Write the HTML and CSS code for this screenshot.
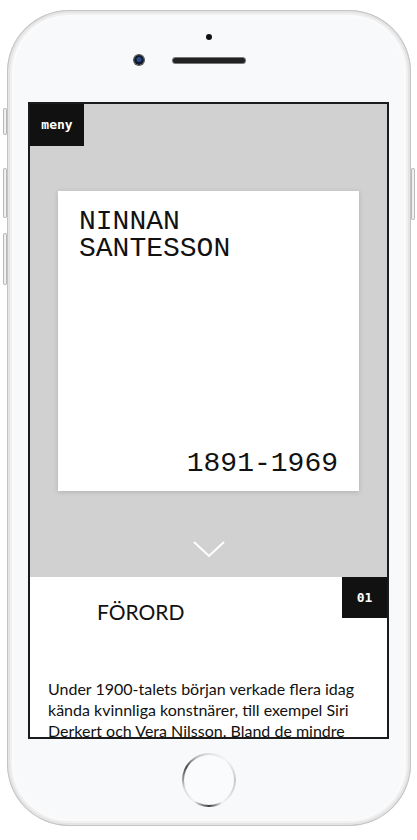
FILE: index.html
```html
<!DOCTYPE html>
<html lang="sv">
<head>
<meta charset="utf-8">
<title>Ninnan Santesson</title>
<link rel="stylesheet" href="styles.css">
</head>
<body>
<div class="phone">
  <span class="side-btn mute"></span>
  <span class="side-btn vol-up"></span>
  <span class="side-btn vol-down"></span>
  <span class="side-btn power"></span>
  <div class="face-top">
    <span class="sensor-dot"></span>
    <div class="sensors">
      <span class="camera"></span>
      <span class="speaker"></span>
      <span></span>
    </div>
  </div>
  <div class="screen">
    <section class="hero">
      <div class="menu">meny</div>
      <div class="card">
        <h1 class="name"><span class="name-line">NINNAN</span><span class="name-line">SANTESSON</span></h1>
        <p class="dates">1891-1969</p>
      </div>
      <svg class="chevron" width="34" height="18" viewBox="0 0 34 18">
        <polyline points="2,2 17,16 32,2" fill="none" stroke="#fff" stroke-width="2"/>
      </svg>
    </section>
    <section class="chapter">
      <div class="chapter-head">
        <h2 class="chapter-title">FÖRORD</h2>
        <span class="chapter-num">01</span>
      </div>
      <p class="chapter-text">Under 1900-talets början verkade flera idag kända kvinnliga konstnärer, till exempel Siri Derkert och Vera Nilsson. Bland de mindre kända finns Ninnan Santesson, skulptör och tecknare.</p>
    </section>
  </div>
  <div class="face-bottom">
    <div class="home"><div class="home-inner"></div></div>
  </div>
</div>
</body>
</html>
```

FILE: styles.css
```css
html, body {
  margin: 0;
  padding: 0;
  background: #fff;
}

.phone {
  position: relative;
  box-sizing: border-box;
  width: 404px;
  height: 816px;
  margin: 10px 0 0 7px;
  border-radius: 62px;
  background: #f8f9fb;
  box-shadow:
    inset 0 0 0 1px #c4c4c4,
    inset 0 0 0 3px #e4e4e4,
    inset 0 0 0 5px #f0f0f0,
    inset 0 0 0 7px #fbfbfb;
  padding: 0 22px 0 21px;
  display: flex;
  flex-direction: column;
}

.side-btn {
  position: absolute;
  width: 4px;
  border-radius: 2px;
  background: linear-gradient(90deg, #e8e8e8, #fafafa);
  box-shadow: inset 0 0 0 1px #b8b8b8;
}
.mute { left: -4px; top: 98px; height: 27px; }
.vol-up { left: -4px; top: 158px; height: 50px; }
.vol-down { left: -4px; top: 223px; height: 52px; }
.power { right: -4px; top: 158px; height: 52px; }

.face-top {
  height: 92px;
  box-sizing: border-box;
  padding-top: 24px;
  display: flex;
  flex-direction: column;
  align-items: center;
}

.sensor-dot {
  width: 6px;
  height: 6px;
  border-radius: 50%;
  background: #111;
}

.sensors {
  margin-top: 15px;
  width: 100%;
  display: grid;
  grid-template-columns: 1fr auto 1fr;
  align-items: center;
}

.camera {
  justify-self: end;
  margin-right: 29px;
  width: 10px;
  height: 10px;
  border-radius: 50%;
  background: radial-gradient(circle at 50% 45%, #2b4c8a 0 2px, #0f1a2e 3px);
  box-shadow: 0 0 0 1px #555;
}

.speaker {
  width: 72px;
  height: 5px;
  border-radius: 3px;
  background: #222;
  box-shadow: 0 0 0 1px #777;
}

.screen {
  box-sizing: border-box;
  width: 361px;
  height: 637px;
  border: 2px solid #1b1b1b;
  background: #fff;
  overflow: hidden;
}

.hero {
  height: 473px;
  background: #d1d1d1;
  display: flex;
  flex-direction: column;
}

.menu {
  width: 54px;
  height: 42px;
  background: #111;
  color: #fff;
  font-family: "DejaVu Sans Mono", monospace;
  font-weight: 700;
  font-size: 13px;
  line-height: 42px;
  text-align: center;
}

.card {
  box-sizing: border-box;
  width: 301px;
  height: 300px;
  margin: 45px 0 0 28px;
  padding: 17px 21px 14px;
  background: #fff;
  box-shadow: 0 1px 5px rgba(0, 0, 0, 0.16);
  display: flex;
  flex-direction: column;
  justify-content: space-between;
  color: #111;
}

.name {
  margin: 0;
  font-family: "Liberation Mono", monospace;
  font-weight: 400;
  font-size: 28px;
  line-height: 27px;
  display: flex;
  flex-direction: column;
}

.name-line {
  display: block;
  height: 27px;
  overflow: visible;
}

.dates {
  margin: 0;
  font-family: "Liberation Mono", monospace;
  font-size: 28px;
  line-height: 27px;
  text-align: right;
}

.chevron {
  display: block;
  margin: 49px auto 0;
}

.chapter-head {
  display: flex;
  justify-content: space-between;
  align-items: flex-start;
}

.chapter-title {
  margin: 0;
  padding: 23px 0 0 67px;
  font-family: Lato, "Liberation Sans", sans-serif;
  font-weight: 400;
  font-size: 21px;
  line-height: 24px;
  color: #111;
}

.chapter-num {
  width: 45px;
  height: 41px;
  background: #111;
  color: #fff;
  font-family: "DejaVu Sans Mono", monospace;
  font-weight: 700;
  font-size: 13px;
  line-height: 41px;
  text-align: center;
}

.chapter-text {
  margin: 54px 0 0;
  padding: 0 18px;
  font-family: Lato, "Liberation Sans", sans-serif;
  font-size: 16px;
  line-height: 21px;
  color: #111;
}

.face-bottom {
  display: flex;
  justify-content: center;
  padding-top: 14px;
}

.home {
  width: 54px;
  height: 54px;
  border-radius: 50%;
  background: conic-gradient(from 0deg, #e0e0e0, #f4f4f4 40deg, #c8c8c8 90deg, #f2f2f2 150deg, #3a3a3a 180deg, #f0f0f0 215deg, #dcdcdc 250deg, #444 300deg, #bdbdbd 330deg, #e0e0e0);
  display: flex;
  align-items: center;
  justify-content: center;
}

.home-inner {
  width: 50px;
  height: 50px;
  border-radius: 50%;
  background: #fafbfc;
}
```
